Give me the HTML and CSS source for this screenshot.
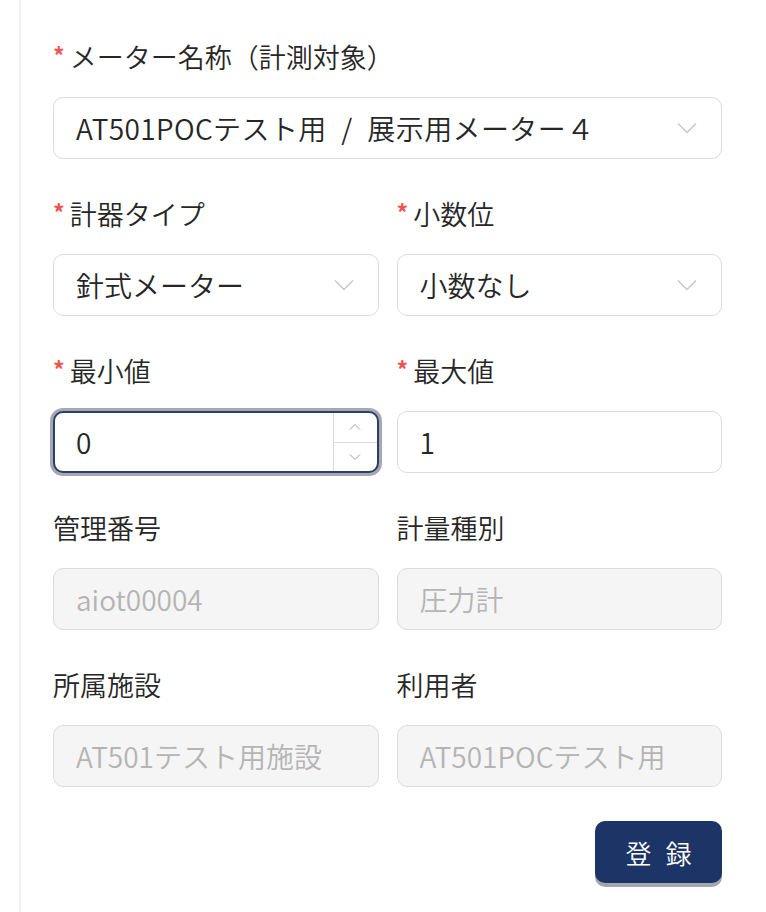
FILE: index.html
```html
<!DOCTYPE html>
<html lang="ja">
<head>
<meta charset="utf-8">
<link rel="stylesheet" href="styles.css">
</head>
<body>
<div class="panel">
  <form class="form">
    <div class="item full">
      <label class="label req">メーター名称（計測対象）</label>
      <div class="control select">
        <span class="value spaced">AT501POCテスト用 / 展示用メーター４</span>
        <svg class="chev" width="20" height="12" viewBox="0 0 20 12"><path d="M1 1.5 L10 10.5 L19 1.5" fill="none" stroke="#c4c6cb" stroke-width="1.4"/></svg>
      </div>
    </div>
    <div class="item">
      <label class="label req">計器タイプ</label>
      <div class="control select">
        <span class="value">針式メーター</span>
        <svg class="chev" width="20" height="12" viewBox="0 0 20 12"><path d="M1 1.5 L10 10.5 L19 1.5" fill="none" stroke="#c4c6cb" stroke-width="1.4"/></svg>
      </div>
    </div>
    <div class="item">
      <label class="label req">小数位</label>
      <div class="control select">
        <span class="value">小数なし</span>
        <svg class="chev" width="20" height="12" viewBox="0 0 20 12"><path d="M1 1.5 L10 10.5 L19 1.5" fill="none" stroke="#c4c6cb" stroke-width="1.4"/></svg>
      </div>
    </div>
    <div class="item">
      <label class="label req">最小値</label>
      <div class="control number focus">
        <span class="value">0</span>
        <div class="spin">
          <div class="spin-btn"><svg width="12" height="8" viewBox="0 0 12 8"><path d="M1 6.5 L6 1.5 L11 6.5" fill="none" stroke="#9a9ca1" stroke-width="1"/></svg></div>
          <div class="spin-btn"><svg width="12" height="8" viewBox="0 0 12 8"><path d="M1 1.5 L6 6.5 L11 1.5" fill="none" stroke="#9a9ca1" stroke-width="1"/></svg></div>
        </div>
      </div>
    </div>
    <div class="item">
      <label class="label req">最大値</label>
      <div class="control"><span class="value">1</span></div>
    </div>
    <div class="item">
      <label class="label">管理番号</label>
      <div class="control disabled"><span class="value">aiot00004</span></div>
    </div>
    <div class="item">
      <label class="label">計量種別</label>
      <div class="control disabled"><span class="value">圧力計</span></div>
    </div>
    <div class="item">
      <label class="label">所属施設</label>
      <div class="control disabled"><span class="value">AT501テスト用施設</span></div>
    </div>
    <div class="item">
      <label class="label">利用者</label>
      <div class="control disabled"><span class="value">AT501POCテスト用</span></div>
    </div>
    <div class="actions full">
      <button type="button" class="btn">登 録</button>
    </div>
  </form>
</div>
</body>
</html>
```

FILE: styles.css
```css
html, body {
  margin: 0;
  padding: 0;
  background: #ffffff;
  height: 100%;
}
body {
  font-family: "Noto Sans CJK JP", "Noto Sans", sans-serif;
  font-weight: 350;
  color: #262626;
}
.panel {
  margin-left: 19px;
  border-left: 2px solid #efefef;
  min-height: 912px;
  box-sizing: border-box;
  padding: 37px 44px 0 32px;
}
.form {
  display: grid;
  grid-template-columns: 1fr 1fr;
  column-gap: 18px;
  row-gap: 35px;
}
.full {
  grid-column: 1 / span 2;
}
.item {
  display: flex;
  flex-direction: column;
}
.label {
  height: 40px;
  margin-bottom: 20px;
  line-height: 40px;
  font-size: 27px;
  color: #262626;
  white-space: nowrap;
  display: flex;
  align-items: center;
}
.label.req::before {
  content: "*";
  color: #f0544f;
  font-size: 23px;
  font-weight: 700;
  margin-right: 5px;
  margin-top: -4px;
}
.control {
  height: 62px;
  box-sizing: border-box;
  border: 1px solid #dcdcdc;
  border-radius: 10px;
  background: #fff;
  display: flex;
  align-items: center;
  padding: 0 0 0 22px;
  font-size: 28px;
  color: #262626;
  position: relative;
}
.value {
  flex: 1;
  white-space: nowrap;
  overflow: hidden;
}
.spaced {
  word-spacing: 8px;
  letter-spacing: 0.4px;
}
.select {
  padding-right: 24px;
}
.chev {
  flex: none;
}
.disabled {
  background: #f5f5f5;
  color: #b4b4b4;
}
.focus {
  border: 2px solid #2b4069;
  box-shadow: 0 0 0 3px #a4a8b0;
  padding-left: 21px;
}
.spin {
  align-self: stretch;
  width: 43px;
  border-left: 1px solid #dcdcdc;
  display: flex;
  flex-direction: column;
}
.spin-btn {
  flex: 1;
  display: flex;
  align-items: center;
  justify-content: center;
}
.spin-btn + .spin-btn {
  border-top: 1px solid #dcdcdc;
}
.actions {
  display: flex;
  justify-content: flex-end;
  margin-top: -1px;
}
.btn {
  width: 127px;
  height: 62px;
  border: none;
  border-radius: 10px;
  background: #1d3566;
  color: #fff;
  font-family: "Noto Sans CJK JP", sans-serif;
  font-weight: 350;
  font-size: 26px;
  letter-spacing: 4px;
  padding: 0 0 0 4px;
  box-shadow: 0 4px 0 #a2a6ae;
}
```
